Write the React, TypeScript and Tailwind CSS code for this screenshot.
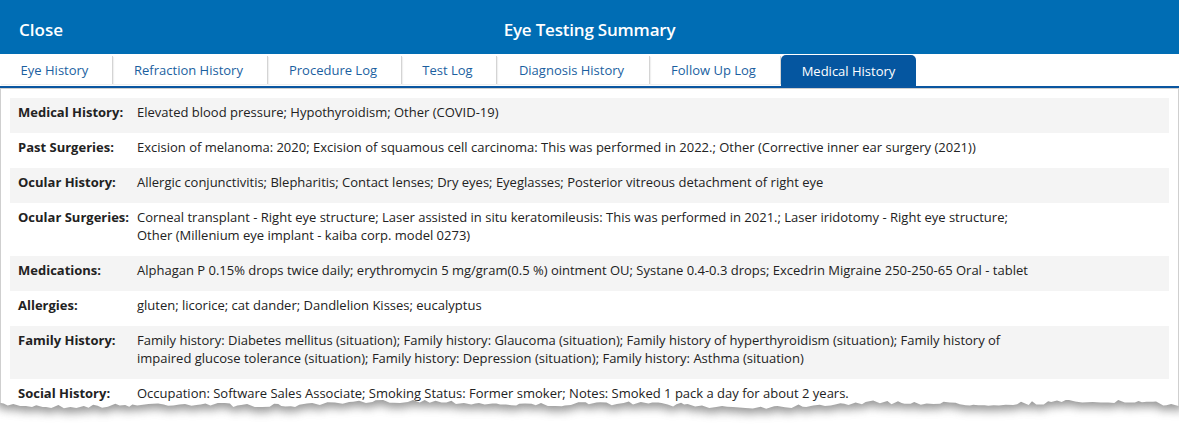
import { useMemo } from "react";

const tabs = [
  { label: "Eye History", w: "w-[113px]" },
  { label: "Refraction History", w: "w-[155px]" },
  { label: "Procedure Log", w: "w-[134px]" },
  { label: "Test Log", w: "w-[95px]" },
  { label: "Diagnosis History", w: "w-[153px]" },
  { label: "Follow Up Log", w: "w-[131px]" },
  { label: "Medical History", w: "w-[135px]", active: true },
];

const rows = [
  {
    label: "Medical History:",
    value: "Elevated blood pressure; Hypothyroidism; Other (COVID-19)",
  },
  {
    label: "Past Surgeries:",
    value:
      "Excision of melanoma: 2020; Excision of squamous cell carcinoma: This was performed in 2022.; Other (Corrective inner ear surgery (2021))",
  },
  {
    label: "Ocular History:",
    value:
      "Allergic conjunctivitis; Blepharitis; Contact lenses; Dry eyes; Eyeglasses; Posterior vitreous detachment of right eye",
  },
  {
    label: "Ocular Surgeries:",
    value:
      "Corneal transplant - Right eye structure; Laser assisted in situ keratomileusis: This was performed in 2021.; Laser iridotomy - Right eye structure; Other (Millenium eye implant - kaiba corp. model 0273)",
  },
  {
    label: "Medications:",
    value:
      "Alphagan P 0.15% drops twice daily; erythromycin 5 mg/gram(0.5 %) ointment OU; Systane 0.4-0.3 drops; Excedrin Migraine 250-250-65 Oral - tablet",
  },
  {
    label: "Allergies:",
    value: "gluten; licorice; cat dander; Dandlelion Kisses; eucalyptus",
  },
  {
    label: "Family History:",
    value:
      "Family history: Diabetes mellitus (situation); Family history: Glaucoma (situation); Family history of hyperthyroidism (situation); Family history of impaired glucose tolerance (situation); Family history: Depression (situation); Family history: Asthma (situation)",
  },
  {
    label: "Social History:",
    value:
      "Occupation: Software Sales Associate; Smoking Status: Former smoker; Notes: Smoked 1 pack a day for about 2 years.",
  },
];

// torn paper edge along the bottom of the screenshot
function TornEdge() {
  const { edge, below } = useMemo(() => {
    let seed = 7;
    const rand = () => {
      seed = (seed * 16807) % 2147483647;
      return seed / 2147483647;
    };
    const pts: [number, number][] = [];
    for (let x = -4; x <= 1184; x += 3 + rand() * 5) {
      const wave = Math.sin(x / 37) * 1.5 + Math.sin(x / 93) * 1.6;
      const y = 16 + wave + (rand() - 0.5) * 4;
      pts.push([x, y]);
    }
    const line = pts.map(([x, y]) => `${x.toFixed(1)},${y.toFixed(1)}`).join(" L");
    return {
      edge: `M-4,-10 L${line} L1184,-10 Z`,
      below: `M-4,60 L${line} L1184,60 Z`,
    };
  }, []);

  return (
    <svg
      className="absolute left-0 bottom-0 w-[1179px] h-[45px]"
      viewBox="0 0 1179 45"
      preserveAspectRatio="none"
    >
      <defs>
        <clipPath id="below">
          <path d={below} />
        </clipPath>
        <filter id="blur" x="-5%" y="-100%" width="110%" height="300%">
          <feGaussianBlur stdDeviation="5" />
        </filter>
      </defs>
      <path d={below} fill="#ffffff" />
      <g clipPath="url(#below)">
        <path d={edge} fill="#6b6b6b" opacity="0.7" filter="url(#blur)" transform="translate(0,5)" />
      </g>
    </svg>
  );
}

export default function App() {
  return (
    <div className="relative h-[433px] w-[1179px] overflow-hidden bg-white font-['Open_Sans',sans-serif] text-[#222]">
      {/* header */}
      <div className="grid h-[54px] grid-cols-[1fr_auto_1fr] items-center bg-[#006db4] px-[19px] pt-[5px] text-white">
        <span className="text-[17px] font-semibold">Close</span>
        <span className="text-[17px] font-semibold tracking-[-0.2px]">Eye Testing Summary</span>
        <span />
      </div>

      {/* tabs */}
      <div className="flex h-[34px] border-b-2 border-[#0a56a0] bg-white">
        {tabs.map((t) =>
          t.active ? (
            <div
              key={t.label}
              className={`${t.w} mt-[1px] flex items-center justify-center rounded-t-[5px] bg-[#0556a0] pt-[2px] text-[13px] text-white`}
            >
              {t.label}
            </div>
          ) : (
            <div
              key={t.label}
              className={`${t.w} my-[2px] flex items-center justify-center border-r border-[#d4d4d4] pt-[2px] pr-[3px] text-[13px] text-[#1b5f9f] shadow-[1px_1px_1px_rgba(0,0,0,0.06)]`}
            >
              {t.label}
            </div>
          )
        )}
      </div>

      {/* content */}
      <div className="h-full border-x border-t border-[#cfcfcf] px-[9px] pt-[9px]">
        {rows.map((r, i) => (
          <div
            key={r.label}
            className={`flex px-[8px] pt-[5px] pb-[12px] text-[13px] leading-[18px] ${i % 2 === 0 ? "bg-[#f4f4f4]" : "bg-white"}`}
          >
            <div className="w-[119px] shrink-0 font-bold">{r.label}</div>
            <div className="max-w-[900px]">{r.value}</div>
          </div>
        ))}
      </div>

      <TornEdge />
    </div>
  );
}
